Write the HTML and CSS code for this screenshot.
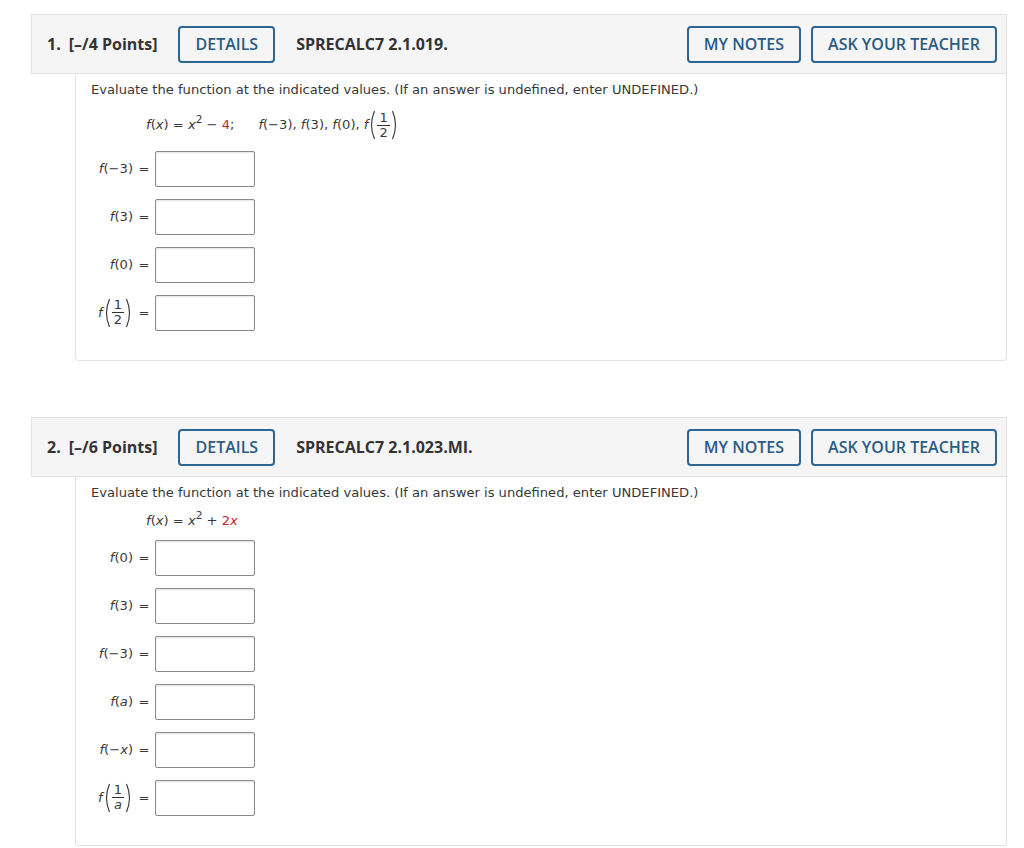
FILE: index.html
```html
<!DOCTYPE html>
<html>
<head>
<meta charset="utf-8">
<link rel="stylesheet" href="styles.css">
</head>
<body>
<div class="page">
  <section class="question">
    <div class="qhead">
      <span class="qnum">1.</span>
      <span class="qpts">[&ndash;/4 Points]</span>
      <button class="btn">DETAILS</button>
      <span class="qcode">SPRECALC7 2.1.019.</span>
      <span class="spacer"></span>
      <button class="btn">MY NOTES</button>
      <button class="btn">ASK YOUR TEACHER</button>
    </div>
    <div class="qbody">
      <p class="prompt">Evaluate the function at the indicated values. (If an answer is undefined, enter UNDEFINED.)</p>
      <div class="formula">
        <span class="m"><i>f</i>(<i>x</i>) = <i>x</i><sup>2</sup> &minus; <span class="red">4</span>;</span>
        <span class="m gapl"><i>f</i>(&minus;3), <i>f</i>(3), <i>f</i>(0), <i>f</i></span>
        <span class="paren"><svg viewBox="0 0 8 30" width="8" height="30"><path d="M6.5 1 Q0.5 15 6.5 29" fill="none" stroke="#333" stroke-width="1.1"/></svg><span class="frac"><span class="num">1</span><span class="den">2</span></span><svg viewBox="0 0 8 30" width="8" height="30"><path d="M1.5 1 Q7.5 15 1.5 29" fill="none" stroke="#333" stroke-width="1.1"/></svg></span>
      </div>
      <div class="answers">
        <div class="row"><span class="lbl"><i>f</i>(&minus;3)</span><span class="eq">=</span><span class="box"></span></div>
        <div class="row"><span class="lbl"><i>f</i>(3)</span><span class="eq">=</span><span class="box"></span></div>
        <div class="row"><span class="lbl"><i>f</i>(0)</span><span class="eq">=</span><span class="box"></span></div>
        <div class="row"><span class="lbl"><i>f</i><span class="paren"><svg viewBox="0 0 8 30" width="8" height="30"><path d="M6.5 1 Q0.5 15 6.5 29" fill="none" stroke="#333" stroke-width="1.1"/></svg><span class="frac"><span class="num">1</span><span class="den">2</span></span><svg viewBox="0 0 8 30" width="8" height="30"><path d="M1.5 1 Q7.5 15 1.5 29" fill="none" stroke="#333" stroke-width="1.1"/></svg></span></span><span class="eq">=</span><span class="box"></span></div>
      </div>
    </div>
  </section>

  <section class="question second">
    <div class="qhead">
      <span class="qnum">2.</span>
      <span class="qpts">[&ndash;/6 Points]</span>
      <button class="btn">DETAILS</button>
      <span class="qcode">SPRECALC7 2.1.023.MI.</span>
      <span class="spacer"></span>
      <button class="btn">MY NOTES</button>
      <button class="btn">ASK YOUR TEACHER</button>
    </div>
    <div class="qbody">
      <p class="prompt">Evaluate the function at the indicated values. (If an answer is undefined, enter UNDEFINED.)</p>
      <div class="formula">
        <span class="m"><i>f</i>(<i>x</i>) = <i>x</i><sup>2</sup> + <span class="red">2</span><i class="red">x</i></span>
      </div>
      <div class="answers">
        <div class="row"><span class="lbl"><i>f</i>(0)</span><span class="eq">=</span><span class="box"></span></div>
        <div class="row"><span class="lbl"><i>f</i>(3)</span><span class="eq">=</span><span class="box"></span></div>
        <div class="row"><span class="lbl"><i>f</i>(&minus;3)</span><span class="eq">=</span><span class="box"></span></div>
        <div class="row"><span class="lbl"><i>f</i>(<i>a</i>)</span><span class="eq">=</span><span class="box"></span></div>
        <div class="row"><span class="lbl"><i>f</i>(&minus;<i>x</i>)</span><span class="eq">=</span><span class="box"></span></div>
        <div class="row"><span class="lbl"><i>f</i><span class="paren"><svg viewBox="0 0 8 30" width="8" height="30"><path d="M6.5 1 Q0.5 15 6.5 29" fill="none" stroke="#333" stroke-width="1.1"/></svg><span class="frac"><span class="num">1</span><span class="den"><i>a</i></span></span><svg viewBox="0 0 8 30" width="8" height="30"><path d="M1.5 1 Q7.5 15 1.5 29" fill="none" stroke="#333" stroke-width="1.1"/></svg></span></span><span class="eq">=</span><span class="box"></span></div>
      </div>
    </div>
  </section>
</div>
</body>
</html>
```

FILE: styles.css
```css
html, body {
  margin: 0;
  padding: 0;
  background: #ffffff;
}
.page {
  padding: 14px 17px 0 31px;
}
.question {
  width: 976px;
}
.question.second {
  margin-top: 56px;
}
.qhead {
  box-sizing: border-box;
  height: 60px;
  display: flex;
  align-items: center;
  background: #f5f5f5;
  border: 1px solid #e2e2e2;
  padding: 0 9px 0 15px;
  font-family: "Open Sans", sans-serif;
  font-size: 16px;
  color: #333333;
}
.qnum {
  font-weight: 700;
  margin-right: 8px;
}
.qpts {
  font-weight: 700;
  margin-right: 21px;
}
.qcode {
  font-weight: 700;
  margin-left: 21px;
}
.spacer {
  flex: 1;
}
.btn {
  box-sizing: border-box;
  height: 37px;
  padding: 0 15px;
  background: #f5f5f5;
  border: 2px solid #2e6590;
  border-radius: 4px;
  font-family: "Open Sans", sans-serif;
  font-size: 16px;
  font-weight: 600;
  color: #2b5b84;
  margin-left: 10px;
}
.qhead .btn:first-of-type {
  margin-left: 0;
}
.qbody {
  margin-left: 44px;
  border: 1px solid #e2e2e2;
  border-top: none;
  border-radius: 0 0 4px 4px;
  padding: 8px 15px 30px 15px;
  font-family: "DejaVu Sans", Verdana, sans-serif;
  font-size: 13.1px;
  color: #383838;
}
.prompt {
  margin: 0;
  line-height: 16px;
  font-size: 13.1px;
}
.formula {
  margin: 12px 0 11px 55px;
  display: flex;
  align-items: center;
  min-height: 16px;
  line-height: 16px;
}
.m sup {
  font-size: 10.5px;
  line-height: 0;
  vertical-align: 6px;
}
.gapl {
  margin-left: 24px;
}
.red {
  color: #c1272d;
}
.paren {
  display: inline-flex;
  align-items: center;
  height: 30px;
}
.paren svg {
  display: block;
}
.frac {
  display: inline-flex;
  flex-direction: column;
  align-items: center;
  font-size: 13px;
  line-height: 14px;
  margin: 0 1px;
}
.frac .num {
  border-bottom: 1px solid #333;
  padding: 0 2px;
}
.frac .den {
  padding: 0 2px;
}
.answers {
  display: flex;
  flex-direction: column;
  gap: 13px;
}
.row {
  display: flex;
  align-items: center;
  height: 35px;
}
.lbl {
  width: 42px;
  display: inline-flex;
  align-items: center;
  justify-content: flex-end;
  white-space: nowrap;
}
.eq {
  width: 22px;
  text-align: center;
}
.box {
  box-sizing: border-box;
  width: 100px;
  height: 36px;
  border: 1px solid #8a8a8a;
  border-radius: 2px;
  box-shadow: inset 0 1px 2px rgba(0,0,0,0.12);
  background: #fff;
}
```
